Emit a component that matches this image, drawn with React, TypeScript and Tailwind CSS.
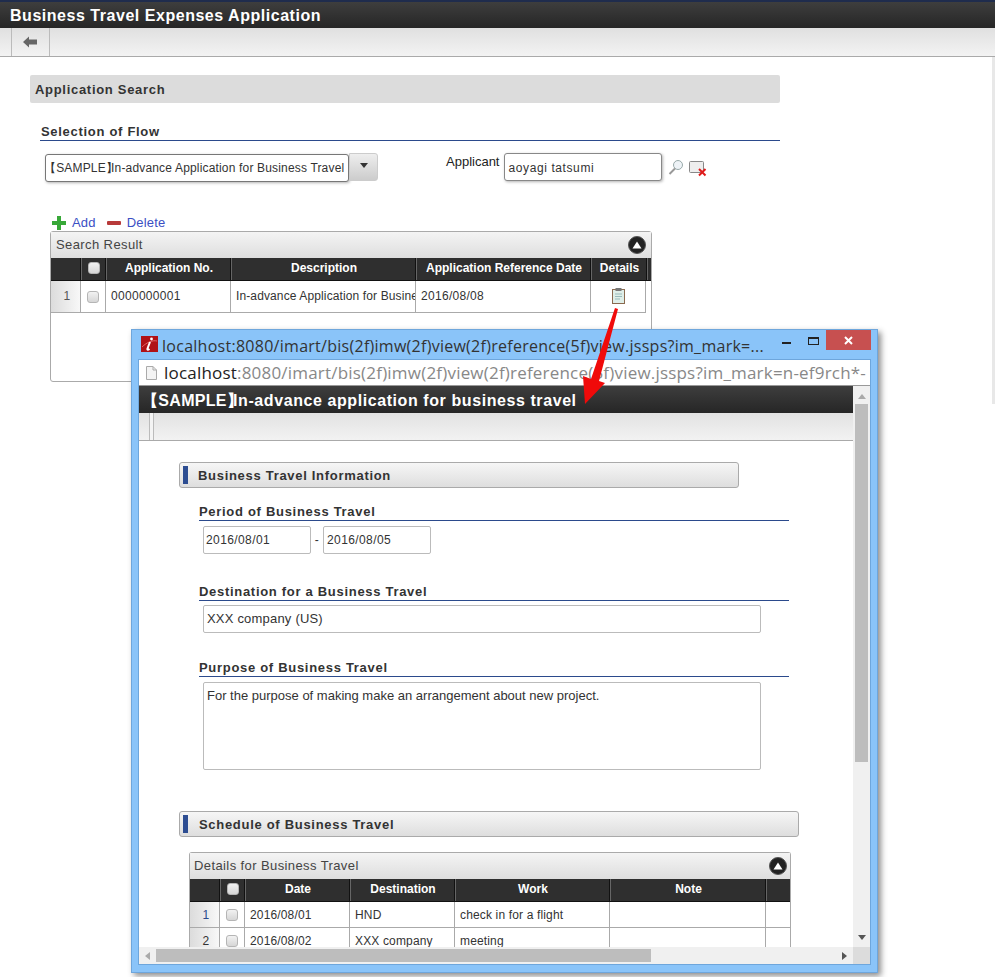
const sans = "font-['Liberation_Sans',Arial,sans-serif]";

const checkbox = "block w-[12px] h-[12px] rounded-[3px] border border-[#b5b5b5] bg-gradient-to-b from-[#f2f2f2] to-[#d6d6d6]";

function CollapseButton() {
  return (
    <span className="flex items-center justify-center w-[18px] h-[18px] rounded-full bg-[#222] border border-[#555]">
      <svg width="10" height="8" viewBox="0 0 10 8">
        <path d="M5 0.5 L9.5 7.5 H0.5 Z" fill="#fff" />
      </svg>
    </span>
  );
}

function HeadCell({ w, label, box }: { w: string; label?: string; box?: boolean }) {
  return (
    <div className={`${w} h-full shrink-0 flex items-center justify-center border-r border-[#111] shadow-[1px_0_0_#666] text-white font-bold text-[12px] pb-[3px] pl-[2px]`}>
      {label}
      {box && <span className={checkbox} />}
    </div>
  );
}

function BodyCell({ w, children, center, num }: { w: string; children?: React.ReactNode; center?: boolean; num?: boolean }) {
  return (
    <div className={`${w} h-full shrink-0 overflow-hidden whitespace-nowrap flex items-center border-r border-[#aaa] ${center ? "justify-center" : "pl-[5px]"} ${num ? "bg-gradient-to-r from-[#dcdcdc] to-[#f8f8f8] pl-[3px]" : ""}`}>
      {children}
    </div>
  );
}

function FieldTitle({ children }: { children: React.ReactNode }) {
  return (
    <div className="w-[590px] h-[18px] pt-[1px] border-b border-[#2b4a8c] text-[13px] font-bold text-[#333] tracking-[0.7px] leading-[15px]">
      {children}
    </div>
  );
}

function SectionBar({ title, width, indent }: { title: string; width: string; indent: string }) {
  return (
    <div className={`${width} h-[26px] rounded-[3px] border border-[#aaa] bg-gradient-to-b from-[#f6f6f6] to-[#dedede] flex items-center pl-[3px]`}>
      <span className="w-[5px] h-[18px] bg-[#2d4d92]" />
      <span className={`${indent} pt-[1px] text-[13px] font-bold text-[#333] tracking-[0.7px]`}>{title}</span>
    </div>
  );
}

function Popup() {
  return (
    <div className="absolute left-[131px] top-[329px] w-[747px] h-[644px] bg-[#8ac4f9] border border-[#6ea6dc] shadow-[3px_3px_6px_rgba(0,0,0,0.45)] flex flex-col">
      {/* title bar */}
      <div className="h-[29px] shrink-0 flex items-start">
        <svg className="ml-[9px] mt-[6px] shrink-0" width="17" height="16" viewBox="0 0 17 16">
          <rect width="17" height="16" fill="#b01116" />
          <path d="M1 11 C6 6 12 4 16 5" stroke="#e77" strokeWidth="0.8" fill="none" />
          <path d="M9 6 L6.5 12.5 C6 14 7 14 8.5 13" stroke="#fff" strokeWidth="2" fill="none" />
          <circle cx="10.5" cy="3" r="1.4" fill="#fff" />
        </svg>
        <span className="ml-[4px] mt-[4px] text-[16px] leading-[24px] text-[#333] font-['Open_Sans',sans-serif] w-[620px] shrink-0 whitespace-nowrap tracking-[0.27px]">
          localhost:8080/imart/bis(2f)imw(2f)view(2f)reference(5f)view.jssps?im_mark=...
        </span>
        <svg className="mt-[12px] shrink-0" width="9" height="2" viewBox="0 0 9 2">
          <rect width="9" height="2" fill="#222" />
        </svg>
        <svg className="ml-[17px] mt-[7px] shrink-0" width="11" height="8" viewBox="0 0 11 8">
          <rect x="0.5" y="0.5" width="10" height="7" fill="none" stroke="#222" />
          <rect width="11" height="2" fill="#222" />
        </svg>
        <div className="ml-[7px] w-[45px] h-[20px] shrink-0 bg-[#c75050] flex items-center justify-center">
          <svg width="9" height="9" viewBox="0 0 9 9">
            <path d="M1 1 L8 8 M8 1 L1 8" stroke="#fff" strokeWidth="2" />
          </svg>
        </div>
      </div>

      <div className="mx-[6px] mb-[7px] flex-1 min-h-0 flex flex-col border border-[#6ea6dc]">
        {/* address bar */}
        <div className="h-[26px] shrink-0 bg-white border-b border-[#999] flex items-center pl-[7px] overflow-hidden">
          <svg width="11" height="14" viewBox="0 0 11 14" className="shrink-0">
            <path d="M0.5 0.5 H7 L10.5 4 V13.5 H0.5 Z" fill="#f4f4f4" stroke="#aaa" />
            <path d="M7 0.5 V4 H10.5" fill="none" stroke="#aaa" />
          </svg>
          <span className="ml-[7px] text-[17px] whitespace-nowrap font-['Open_Sans',sans-serif] text-[#888] tracking-[0.2px]">
            <span className="text-[#222]">localhost</span>:8080/imart/bis(2f)imw(2f)view(2f)reference(5f)view.jssps?im_mark=n-ef9rch*-
          </span>
        </div>

        <div className="flex-1 min-h-0 flex">
          <div className="flex-1 min-w-0 flex flex-col bg-white overflow-hidden">
            <div className="h-[27px] shrink-0 bg-gradient-to-b from-[#3e3e3e] to-[#262626] pl-[3px] pt-[2px] flex items-center text-white font-bold text-[16px] tracking-[0.58px] whitespace-nowrap">
              <span className="mr-[-10px] tracking-[0.3px]">【SAMPLE】</span>In-advance application for business travel
            </div>
            <div className="h-[28px] shrink-0 bg-gradient-to-b from-[#e2e2e2] to-[#f2f2f2] border-b border-[#aaa] pl-[10px] flex">
              <span className="w-[5px] h-full border-x border-[#bbb] bg-[#f4f4f4]" />
            </div>

            <div className="flex-1 min-h-0 overflow-hidden pl-[40px] pt-[21px]">
              <SectionBar title="Business Travel Information" width="w-[560px]" indent="ml-[10px]" />

              <div className="ml-[20px] mt-[15px]">
                <FieldTitle>Period of Business Travel</FieldTitle>
                <div className="flex items-center mt-[5px] ml-[4px] text-[12px] text-[#333] tracking-[0.4px]">
                  <div className="w-[108px] h-[28px] border border-[#bbb] rounded-[2px] pl-[2px] flex items-center">2016/08/01</div>
                  <span className="w-[12px] text-center">-</span>
                  <div className="w-[108px] h-[28px] border border-[#bbb] rounded-[2px] pl-[3px] flex items-center">2016/08/05</div>
                </div>

                <div className="mt-[29px]">
                  <FieldTitle>Destination for a Business Travel</FieldTitle>
                </div>
                <div className="mt-[4px] ml-[4px] w-[558px] h-[28px] border border-[#bbb] rounded-[2px] pl-[3px] flex items-center text-[13px] text-[#333] tracking-[0.2px]">
                  XXX company (US)
                </div>

                <div className="mt-[26px]">
                  <FieldTitle>Purpose of Business Travel</FieldTitle>
                </div>
                <div className="mt-[5px] ml-[4px] w-[558px] h-[88px] border border-[#bbb] rounded-[2px] pl-[3px] pt-[5px] text-[13px] leading-[15px] text-[#333]">
                  For the purpose of making make an arrangement about new project.
                </div>
              </div>

              <div className="mt-[41px]">
                <SectionBar title="Schedule of Business Travel" width="w-[620px]" indent="ml-[11px]" />
              </div>

              {/* details table, cut off by the window */}
              <div className="ml-[10px] mt-[15px] w-[602px] border-x border-t border-[#aaa] rounded-t-[3px]">
                <div className="h-[26px] bg-gradient-to-b from-[#f4f4f4] to-[#dedede] flex items-center justify-between pl-[4px] pr-[3px] text-[13px] text-[#444]">
                  <span className="tracking-[0.4px]">Details for Business Travel</span>
                  <CollapseButton />
                </div>
                <div className="h-[23px] bg-[#2f2f2f] flex border-b border-[#111]">
                  <HeadCell w="w-[30px]" />
                  <HeadCell w="w-[25px]" box />
                  <HeadCell w="w-[105px]" label="Date" />
                  <HeadCell w="w-[105px]" label="Destination" />
                  <HeadCell w="w-[155px]" label="Work" />
                  <HeadCell w="w-[156px]" label="Note" />
                </div>
                <div className="h-[26px] flex border-b border-[#aaa] text-[12px] text-[#333] tracking-[0.15px]">
                  <BodyCell w="w-[30px]" center num><span className="text-[#2b4a8c]">1</span></BodyCell>
                  <BodyCell w="w-[25px]" center><span className={checkbox} /></BodyCell>
                  <BodyCell w="w-[105px]">2016/08/01</BodyCell>
                  <BodyCell w="w-[105px]">HND</BodyCell>
                  <BodyCell w="w-[155px]">check in for a flight</BodyCell>
                  <BodyCell w="w-[156px]" />
                </div>
                <div className="h-[26px] flex border-b border-[#aaa] text-[12px] text-[#333] tracking-[0.15px]">
                  <BodyCell w="w-[30px]" center num>2</BodyCell>
                  <BodyCell w="w-[25px]" center><span className={checkbox} /></BodyCell>
                  <BodyCell w="w-[105px]">2016/08/02</BodyCell>
                  <BodyCell w="w-[105px]">XXX company</BodyCell>
                  <BodyCell w="w-[155px]">meeting</BodyCell>
                  <BodyCell w="w-[156px]" />
                </div>
              </div>
            </div>

            {/* horizontal scrollbar */}
            <div className="h-[17px] shrink-0 bg-[#f0f0f0] flex items-center">
              <svg className="ml-[6px]" width="5" height="8" viewBox="0 0 5 8"><path d="M5 0 V8 L0 4 Z" fill="#aaa" /></svg>
              <span className="ml-[6px] w-[495px] h-[13px] bg-[#bdbdbd]" />
              <svg className="ml-[191px]" width="5" height="8" viewBox="0 0 5 8"><path d="M0 0 V8 L5 4 Z" fill="#555" /></svg>
            </div>
          </div>

          {/* vertical scrollbar */}
          <div className="w-[17px] shrink-0 bg-[#f0f0f0] flex flex-col items-center">
            <svg className="mt-[8px]" width="8" height="5" viewBox="0 0 8 5"><path d="M0 5 H8 L4 0 Z" fill="#aaa" /></svg>
            <span className="mt-[5px] w-[13px] h-[358px] bg-[#bdbdbd]" />
            <svg className="mt-[173px]" width="8" height="5" viewBox="0 0 8 5"><path d="M0 0 H8 L4 5 Z" fill="#555" /></svg>
            <span className="mt-auto w-[17px] h-[17px] bg-[#dcdcdc]" />
          </div>
        </div>
      </div>
    </div>
  );
}

export default function App() {
  return (
    <div className={`relative w-[995px] h-[977px] overflow-hidden bg-white ${sans}`}>
      <div className="h-[2px] bg-[#1f2c4d]" />
      <div className="h-[26px] bg-gradient-to-b from-[#3e3e3e] to-[#262626] pl-[10px] pt-[2px] flex items-center text-white font-bold text-[16px] tracking-[0.53px]">
        Business Travel Expenses Application
      </div>
      <div className="h-[29px] bg-gradient-to-b from-[#e0e0e0] to-[#f3f3f3] border-b border-[#aaa] pl-[11px] flex">
        <div className="w-[39px] h-full border-x border-[#bbb] flex items-center justify-center pr-[2px]">
          <svg width="14" height="12" viewBox="0 0 14 12">
            <path d="M0 6 L6 0.5 V3.5 H14 V8.5 H6 V11.5 Z" fill="#666" />
          </svg>
        </div>
      </div>

      <div className="pl-[30px] pt-[18px]">
        <div className="w-[750px] h-[28px] rounded-[2px] bg-[#dcdcdc] pl-[5px] pt-[1px] flex items-center text-[13px] font-bold text-[#333] tracking-[0.7px]">
          Application Search
        </div>

        <div className="ml-[10px] mt-[20px] w-[740px] h-[18px] pt-[1px] border-b border-[#2b4a8c] pl-[1px] text-[13px] font-bold text-[#333] tracking-[0.7px] leading-[15px]">
          Selection of Flow
        </div>

        <div className="flex items-start mt-[12px] ml-[15px]">
          <div className="w-[304px] h-[28px] mt-[1px] bg-white border border-[#777] rounded-[3px] shadow-[1px_1px_3px_rgba(0,0,0,0.3)] flex items-center text-[12px] text-[#333] tracking-[0.17px] whitespace-nowrap overflow-hidden">
            <span className="ml-[-2px] mr-[-7px]">【SAMPLE】</span>In-advance Application for Business Travel
          </div>
          <div className="w-[29px] h-[28px] border border-[#ccc] rounded-r-[3px] bg-gradient-to-b from-[#eee] to-[#ccc] flex items-center justify-center pb-[4px]">
            <svg width="8" height="5" viewBox="0 0 8 5"><path d="M0 0 H8 L4 5 Z" fill="#333" /></svg>
          </div>
          <span className="ml-[68px] text-[13px] leading-[18px] text-[#222]">Applicant</span>
          <div className="ml-[5px] w-[158px] h-[28px] pt-[1px] bg-white border border-[#888] rounded-[3px] shadow-[1px_1px_3px_rgba(0,0,0,0.3)] flex items-center pl-[3px] text-[12px] text-[#333] tracking-[0.6px]">
            aoyagi tatsumi
          </div>
          <svg className="ml-[6px] mt-[6px]" width="16" height="16" viewBox="0 0 16 16">
            <circle cx="10" cy="6" r="4.5" fill="#eef3f7" stroke="#9aa" />
            <path d="M7 9.5 L1.5 15" stroke="#999" strokeWidth="2" />
          </svg>
          <svg className="ml-[5px] mt-[8px]" width="18" height="16" viewBox="0 0 18 16">
            <rect x="0.5" y="0.5" width="14" height="11" rx="1" fill="#eee" stroke="#888" />
            <path d="M10 8 L16.5 14.5 M16.5 8 L10 14.5" stroke="#e01b1b" strokeWidth="2" />
          </svg>
        </div>

        <div className="flex items-center ml-[22px] mt-[33px] text-[13px] text-[#3b4fc4] h-[15px]">
          <svg width="14" height="14" viewBox="0 0 14 14"><path d="M5 0 H9 V5 H14 V9 H9 V14 H5 V9 H0 V5 H5 Z" fill="#38a838" /></svg>
          <span className="ml-[6px] tracking-[0.2px]">Add</span>
          <span className="ml-[11px] w-[14px] h-[4px] rounded-[1px] bg-[#b83a3a]" />
          <span className="ml-[6px] tracking-[0.2px]">Delete</span>
        </div>

        {/* search result panel */}
        <div className="ml-[20px] mt-[1px] w-[602px] h-[151px] border border-[#aaa] rounded-[3px]">
          <div className="h-[26px] bg-gradient-to-b from-[#f4f4f4] to-[#dedede] flex items-center justify-between pl-[5px] pr-[5px] text-[13px] text-[#444] tracking-[0.4px]">
            <span>Search Result</span>
            <CollapseButton />
          </div>
          <div className="h-[23px] bg-[#2f2f2f] flex border-b border-[#111]">
            <HeadCell w="w-[30px]" />
            <HeadCell w="w-[25px]" box />
            <HeadCell w="w-[125px]" label="Application No." />
            <HeadCell w="w-[185px]" label="Description" />
            <HeadCell w="w-[175px]" label="Application Reference Date" />
            <HeadCell w="w-[56px]" label="Details" />
          </div>
          <div className="w-[595px] h-[32px] flex border-b border-[#aaa] text-[12px] text-[#333] tracking-[0.3px]">
            <BodyCell w="w-[30px]" center num><span className="mb-[2px] text-[#555]">1</span></BodyCell>
            <BodyCell w="w-[25px]" center><span className={checkbox} /></BodyCell>
            <BodyCell w="w-[125px]"><span className="mb-[2px]">0000000001</span></BodyCell>
            <BodyCell w="w-[185px]"><span className="mb-[2px] tracking-[0.12px]">In-advance Application for Business Travel</span></BodyCell>
            <BodyCell w="w-[175px]"><span className="mb-[2px]">2016/08/08</span></BodyCell>
            <BodyCell w="w-[55px]" center>
              <svg className="mb-[2px]" width="13" height="16" viewBox="0 0 13 16">
                <rect x="0.5" y="1.5" width="12" height="14" fill="#dfeee8" stroke="#8a6a4f" />
                <rect x="3.5" y="0" width="6" height="3" fill="#777" />
                <path d="M3 6 H10 M3 8.5 H10 M3 11 H8" stroke="#9bb" />
              </svg>
            </BodyCell>
          </div>
        </div>
      </div>

      {/* edge of the page scrollbar */}
      <div className="absolute right-0 top-[57px] w-[3px] h-[347px] bg-[#e8e8e8]" />

      <Popup />

      {/* annotation arrow */}
      <svg className="absolute left-[578px] top-[303px]" width="45" height="106" viewBox="0 0 45 106">
        <path d="M37 5 L40 6 L21 78 L27 80 L7 101 L5 73 L13 76 Z" fill="#f00a0a" />
      </svg>
    </div>
  );
}
